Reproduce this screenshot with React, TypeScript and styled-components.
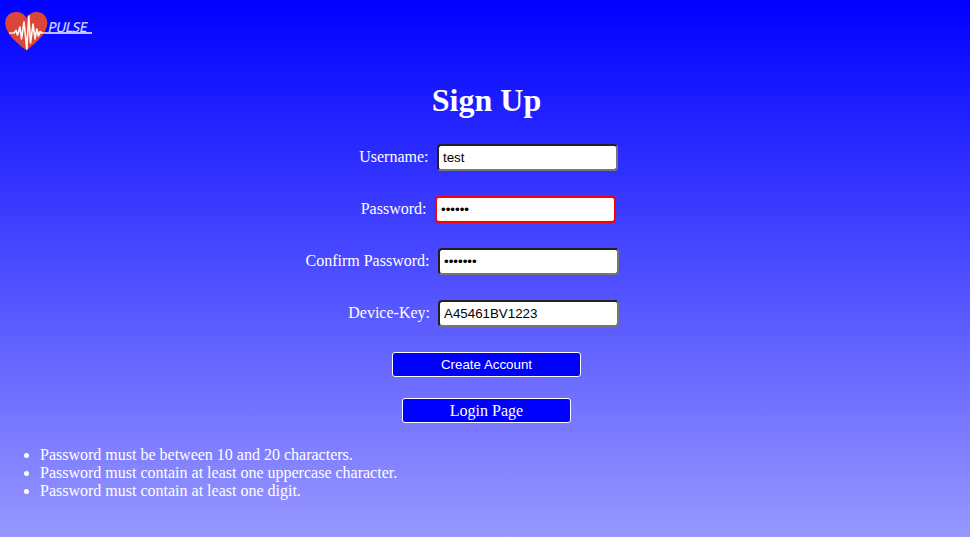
import React from "react";
import styled, { createGlobalStyle } from "styled-components";

const GlobalStyle = createGlobalStyle`
  html, body { margin: 0; height: 100%; }
  body { overflow: hidden; }
  #root { height: 100%; }
  * { box-sizing: border-box; }
`;

const Page = styled.div`
  height: 537px;
  background: linear-gradient(#0000ff, #9898ff);
  color: #fff;
  font: 16px/18px "Liberation Serif", "Times New Roman", serif;
`;

const Header = styled.header`
  height: 82px;
  padding: 9px 0 0 4px;
`;

const LogoImage = styled.svg`
  display: block;
`;

const Title = styled.h1`
  margin: 0 0 25px;
  padding-left: 3px;
  font-size: 32px;
  line-height: 37px;
  text-align: center;
`;

const Form = styled.form`
  display: flex;
  flex-direction: column;
`;

const Row = styled.div`
  display: flex;
  align-items: center;
  height: 27px;
  margin-bottom: 25px;
`;

const Label = styled.label<{ $width: number; $gap: number }>`
  width: ${(p) => p.$width}px;
  padding: 0 ${(p) => p.$gap}px 1px 0;
  text-align: right;
  white-space: nowrap;
`;

const Input = styled.input<{ $invalid?: boolean }>`
  width: 181px;
  height: 27px;
  padding: 1px 4px;
  border: 2px ${(p) => (p.$invalid ? "solid #ff0000" : "inset #767676")};
  border-radius: 4px;
  background: #fff;
  color: #000;
  font: 13.333px "Liberation Sans", Arial, sans-serif;
  outline: none;
`;

const Button = styled.button`
  align-self: center;
  width: 189px;
  height: 25px;
  margin: 0 0 21px 3px;
  padding: 0;
  border: 1px solid #fff;
  border-radius: 3px;
  background: #0000ff;
  color: #fff;
  font: 13.333px "Liberation Sans", Arial, sans-serif;
`;

const LoginLink = styled.a`
  display: block;
  align-self: center;
  width: 169px;
  height: 25px;
  margin-left: 3px;
  border: 1px solid #fff;
  border-radius: 3px;
  background: #0000ff;
  line-height: 24px;
  text-align: center;
`;

const Rules = styled.ul`
  margin: 23px 0 0;
  padding-left: 40px;
`;

const fields = [
  { id: "username", label: "Username:", type: "text", value: "test", width: 437, gap: 8.5 },
  { id: "password", label: "Password:", type: "password", value: "secret", width: 435, gap: 8.5, invalid: true },
  { id: "confirm", label: "Confirm Password:", type: "password", value: "secret1", width: 438, gap: 8.5 },
  { id: "device", label: "Device-Key:", type: "text", value: "A45461BV1223", width: 438, gap: 8 },
];

function Logo() {
  return (
    <LogoImage width="90" height="43" viewBox="4 9 90 43" role="img" aria-label="Pulse">
      <path
        d="M26.500 50.500C21 46 10.500 39 6.500 29C2.500 19 8.500 12 16 12C21 12 24.500 14.500 26.300 18C28.500 14.500 32 12 36.500 12C44 12 49 18.500 46.800 26.500C43.500 38 32 45.500 26.500 50.500Z"
        fill="#dc4638"
      />
      <path d="M9 33H15" stroke="#fbdcda" strokeWidth="1.600" />
      <path d="M40 33H47" stroke="#f8d5df" strokeWidth="1.600" />
      <path d="M46 33H92" stroke="#bebeff" strokeWidth="2" />
      <path
        d="M14 33L16 30.500L17.500 35L20 27L21.500 39L24 22L26.800 49L28.800 16L30.500 43L33 24L35 39L36.800 29L38.500 36L40 31.500L42 33"
        fill="none"
        stroke="#fff4f2"
        strokeWidth="1.700"
        strokeLinejoin="round"
      />
      <text
        transform="translate(47.500 31.500) skewX(-12)"
        fill="#dedeff"
        stroke="#dedeff"
        strokeWidth="0.300"
        fontFamily="Open Sans, sans-serif"
        fontSize="13.500"
        textLength="39"
        lengthAdjust="spacing"
      >
        PULSE
      </text>
    </LogoImage>
  );
}

export default function App() {
  return (
    <>
      <GlobalStyle />
      <Page>
        <Header>
          <Logo />
        </Header>
        <Title>Sign Up</Title>
        <Form>
          {fields.map((f) => (
            <Row key={f.id}>
              <Label htmlFor={f.id} $width={f.width} $gap={f.gap}>
                {f.label}
              </Label>
              <Input id={f.id} type={f.type} defaultValue={f.value} $invalid={f.invalid} />
            </Row>
          ))}
          <Button type="button">Create Account</Button>
          <LoginLink>Login Page</LoginLink>
        </Form>
        <Rules>
          <li>Password must be between 10 and 20 characters.</li>
          <li>Password must contain at least one uppercase character.</li>
          <li>Password must contain at least one digit.</li>
        </Rules>
      </Page>
    </>
  );
}
